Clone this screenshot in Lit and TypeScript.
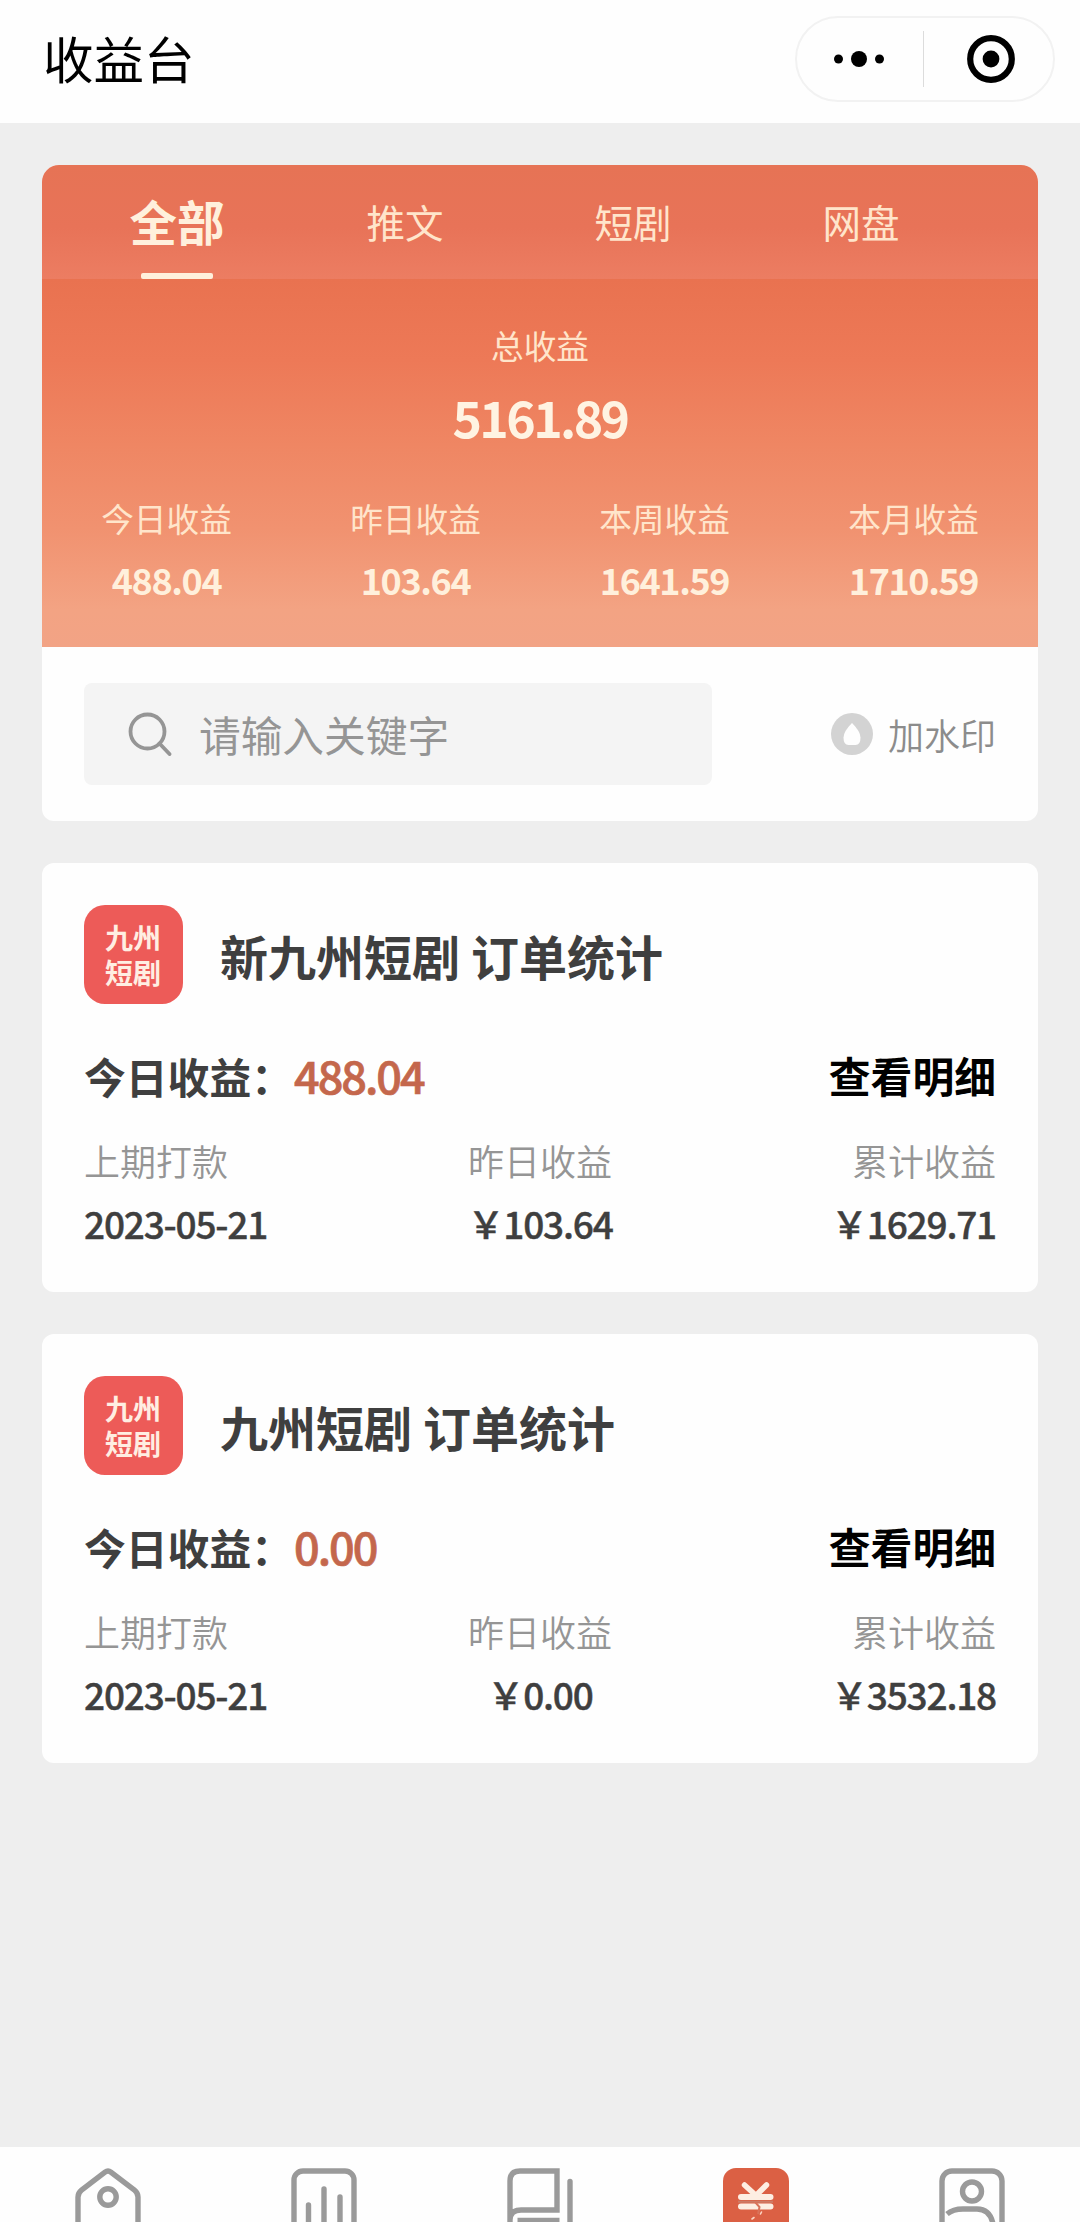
import { LitElement, html, css, svg } from "lit";
import { customElement, property } from "lit/decorators.js";

interface Stat {
  label: string;
  value: string;
}

interface Order {
  title: string;
  today: string;
  stats: Stat[];
}

const TABS = ["全部", "推文", "短剧", "网盘"];

const SUMMARY: Stat[] = [
  { label: "今日收益", value: "488.04" },
  { label: "昨日收益", value: "103.64" },
  { label: "本周收益", value: "1641.59" },
  { label: "本月收益", value: "1710.59" },
];

const ORDERS: Order[] = [
  {
    title: "新九州短剧 订单统计",
    today: "488.04",
    stats: [
      { label: "上期打款", value: "2023-05-21" },
      { label: "昨日收益", value: "￥103.64" },
      { label: "累计收益", value: "￥1629.71" },
    ],
  },
  {
    title: "九州短剧 订单统计",
    today: "0.00",
    stats: [
      { label: "上期打款", value: "2023-05-21" },
      { label: "昨日收益", value: "￥0.00" },
      { label: "累计收益", value: "￥3532.18" },
    ],
  },
];

/* Tab bar glyphs, each drawn on a 66-unit square. */
const NAV_ICONS = [
  svg`<path d="M3 70V29Q3 25 6.500 22.200L30 4.200Q33 2 36 4.200L59.500 22.200Q63 25 63 29V70"/>
      <circle cx="33" cy="29" r="8.200"/>`,
  svg`<rect x="3" y="3" width="60" height="70" rx="9"/>
      <path stroke-linecap="round" d="M17.500 37V70M33 21V70M49 29V70"/>`,
  svg`<path d="M3 70V13Q3 3 13 3H50V42H14Q3 42 3 52"/>
      <path d="M10.500 52.500H52.500"/>
      <path stroke-linecap="round" d="M63 13.500V70"/>`,
  svg`<rect x="0" y="0" width="66" height="70" rx="13" fill="#db6044" stroke="none"/>
      <g stroke="#fdeee2" stroke-width="6" stroke-linecap="round">
        <path stroke-width="5.500" d="M21.500 17L33 27.500L43.500 17"/>
        <path d="M18 29H47.500M18 38.500H47.500"/>
      </g>
      <path d="M15 33.800H50" stroke="#cc7b66" stroke-width="2"/>
      <path d="M32 34L36.500 39L35 46" stroke="#d8735a" stroke-width="2"/>
      <path d="M37.500 46L38.500 44M29 51L31 49.500" stroke="#fbd5c4" stroke-width="1.600" stroke-linecap="round"/>`,
  svg`<rect x="3" y="3" width="60" height="70" rx="10"/>
      <circle cx="33" cy="23.500" r="9.500"/>
      <path d="M8 46Q14 41 24 41H38Q51 41 54 56"/>`,
];

@customElement("order-card")
class OrderCard extends LitElement {
  @property({ attribute: false }) order!: Order;

  static styles = css`
    :host {
      display: flex;
      flex-direction: column;
      box-sizing: border-box;
      height: 429px;
      padding: 42px;
      border-radius: 12px;
      background: #fefefe;
      color: #3f3f3f;
    }
    .head {
      display: flex;
      align-items: center;
      gap: 37px;
      height: 99px;
    }
    .logo {
      display: flex;
      align-items: center;
      justify-content: center;
      width: 99px;
      height: 99px;
      border-radius: 21px;
      background: #ed5b58;
      color: #ffeee2;
      font-size: 28px;
      line-height: 35px;
      font-weight: 700;
    }
    .logo-text {
      width: 57px;
      word-break: break-all;
    }
    .title {
      font-size: 48px;
      line-height: 60px;
      font-weight: 700;
      white-space: pre;
    }
    .today {
      display: flex;
      justify-content: space-between;
      height: 60px;
      margin-top: 41px;
      font-size: 41.8px;
      line-height: 60px;
      font-weight: 700;
    }
    .amount {
      display: inline-block;
      margin-left: 1px;
      font-size: 45px;
      font-weight: 500;
      letter-spacing: -2px;
      color: #c4674c;
      -webkit-text-stroke: 0.7px #c4674c;
    }
    .link {
      color: #000;
    }
    .stats {
      display: grid;
      grid-template-columns: 1fr 1fr 1fr;
      margin-top: 30px;
    }
    .stat {
      text-align: center;
    }
    .stat:first-child {
      text-align: left;
    }
    .stat:last-child {
      text-align: right;
    }
    .label {
      font-size: 36px;
      line-height: 50px;
      font-weight: 350;
      color: #959595;
    }
    .value {
      margin-top: 13px;
      font-size: 37px;
      line-height: 50px;
      font-weight: 500;
      letter-spacing: -1.2px;
      -webkit-text-stroke: 0.4px #3f3f3f;
    }
  `;

  render() {
    const { title, today, stats } = this.order;
    return html`
      <div class="head">
        <div class="logo"><div class="logo-text">九州短剧</div></div>
        <div class="title">${title}</div>
      </div>
      <div class="today">
        <span>今日收益：<span class="amount">${today}</span></span>
        <span class="link">查看明细</span>
      </div>
      <div class="stats">
        ${stats.map(
          (s) => html`<div class="stat">
            <div class="label">${s.label}</div>
            <div class="value">${s.value}</div>
          </div>`
        )}
      </div>
    `;
  }
}

@customElement("app-root")
class AppRoot extends LitElement {
  static styles = css`
    :host {
      display: flex;
      flex-direction: column;
      height: 2222px;
      overflow: hidden;
      background: #eeeeee;
      font-family: "Noto Sans CJK SC", sans-serif;
    }
    .header {
      display: flex;
      align-items: center;
      justify-content: space-between;
      box-sizing: border-box;
      height: 123px;
      flex: none;
      padding: 0 25px 5px 43px;
      background: #fefefe;
    }
    .page-title {
      padding-bottom: 4px;
      font-size: 50.5px;
      line-height: 72px;
      color: #000;
    }
    .capsule {
      display: flex;
      align-items: center;
      box-sizing: border-box;
      width: 260px;
      height: 86px;
      border: 2px solid #f2f2f2;
      border-radius: 43px;
    }
    .capsule-half {
      display: flex;
      flex: 1;
      justify-content: center;
    }
    .capsule-half:first-child {
      padding-right: 2px;
    }
    .capsule-half:last-child {
      padding-left: 6px;
    }
    .divider {
      width: 1px;
      height: 56px;
      background: #dcdcdc;
    }
    .content {
      display: flex;
      flex-direction: column;
      gap: 42px;
      flex: 1;
      padding: 42px 42px 0;
    }
    .summary {
      border-radius: 17px 17px 12px 12px;
      overflow: hidden;
      background: #fefefe;
    }
    .tabs {
      display: grid;
      grid-template-columns: repeat(4, 228px);
      height: 114px;
      padding-left: 21px;
      background: linear-gradient(#e67355 0%, #e87358 55%, #ec7d62 100%);
    }
    .tab {
      display: flex;
      flex-direction: column;
      align-items: center;
      justify-content: space-between;
      font-size: 38.5px;
      line-height: 56px;
      padding-top: 28px;
      color: #ffe5cb;
    }
    .tab.active {
      font-size: 47.5px;
      font-weight: 700;
      color: #fff0dc;
    }
    .underline {
      width: 72px;
      height: 6px;
      border-radius: 2px;
      background: #fff0dc;
    }
    .totals {
      box-sizing: border-box;
      height: 368px;
      padding-top: 42px;
      text-align: center;
      color: #ffe5cb;
      background: linear-gradient(#e97250 0%, #ed7957 22%, #ef8663 45%, #f19270 68%, #f3a383 90%, #f2a385 100%);
    }
    .total-label,
    .cell-label {
      font-size: 32.7px;
      line-height: 48px;
    }
    .total {
      margin-top: 12px;
      font-size: 50px;
      line-height: 70px;
      font-weight: 700;
      letter-spacing: -2.6px;
      color: #fff3e2;
    }
    .cells {
      display: grid;
      grid-template-columns: repeat(4, 1fr);
      margin-top: 43px;
    }
    .cell-value {
      margin-top: 12px;
      font-size: 36px;
      line-height: 50px;
      font-weight: 700;
      letter-spacing: -1.4px;
      color: #fff0dc;
    }
    .tools {
      display: flex;
      align-items: center;
      justify-content: space-between;
      box-sizing: border-box;
      height: 174px;
      padding: 0 42px;
    }
    .search {
      display: flex;
      align-items: center;
      gap: 27px;
      box-sizing: border-box;
      width: 628px;
      height: 102px;
      padding-left: 44px;
      border-radius: 8px;
      background: #f4f4f4;
      color: #959595;
      font-size: 41.7px;
      line-height: 60px;
    }
    .watermark {
      display: flex;
      align-items: center;
      gap: 15px;
      font-size: 36px;
      line-height: 52px;
      font-weight: 350;
      color: #8c8c8c;
    }
    .icon {
      display: block;
      flex: none;
    }
    .nav {
      display: grid;
      grid-template-columns: repeat(5, 1fr);
      justify-items: center;
      flex: none;
      box-sizing: border-box;
      height: 75px;
      padding-top: 21px;
      overflow: hidden;
      background: #fefefe;
    }
  `;

  render() {
    return html`
      <div class="header">
        <div class="page-title">收益台</div>
        <div class="capsule">
          <div class="capsule-half">
            <svg class="icon" width="52" height="20" viewBox="0 0 52 20">
              <circle cx="5.500" cy="10" r="4.500" />
              <circle cx="26" cy="10" r="8" />
              <circle cx="46.500" cy="10" r="4.500" />
            </svg>
          </div>
          <div class="divider"></div>
          <div class="capsule-half">
            <svg class="icon" width="48" height="48" viewBox="0 0 48 48">
              <circle cx="24" cy="24" r="20.800" fill="none" stroke="#000" stroke-width="6.200" />
              <circle cx="24" cy="24" r="8.400" />
            </svg>
          </div>
        </div>
      </div>

      <div class="content">
        <div class="summary">
          <div class="tabs">
            ${TABS.map(
              (t, i) => html`<div class="tab ${i === 0 ? "active" : ""}">
                <span>${t}</span>
                ${i === 0 ? html`<div class="underline"></div>` : ""}
              </div>`
            )}
          </div>
          <div class="totals">
            <div class="total-label">总收益</div>
            <div class="total">5161.89</div>
            <div class="cells">
              ${SUMMARY.map(
                (s) => html`<div>
                  <div class="cell-label">${s.label}</div>
                  <div class="cell-value">${s.value}</div>
                </div>`
              )}
            </div>
          </div>
          <div class="tools">
            <div class="search">
              <svg class="icon" width="44" height="44" viewBox="0 0 44 44" fill="none" stroke="#959595" stroke-width="3.800">
                <circle cx="19.500" cy="19.500" r="17" />
                <path d="M31.500 31.500L41.500 42" stroke-linecap="round" />
              </svg>
              <span>请输入关键字</span>
            </div>
            <div class="watermark">
              <svg class="icon" width="42" height="42" viewBox="0 0 42 42">
                <circle cx="21" cy="21" r="21" fill="#d3d3d3" />
                <path d="M21 10Q29.500 18.500 29.500 24.500Q29.500 32 24.500 32H17.500Q12.500 32 12.500 24.500Q12.500 18.500 21 10Z" fill="#fefefe" />
              </svg>
              <span>加水印</span>
            </div>
          </div>
        </div>
        ${ORDERS.map((o) => html`<order-card .order=${o}></order-card>`)}
      </div>

      <div class="nav">
        ${NAV_ICONS.map(
          (icon) => html`<svg class="icon" width="66" height="66" viewBox="0 0 66 66" fill="none" stroke="#9a9a9a" stroke-width="5.400">
            ${icon}
          </svg>`
        )}
      </div>
    `;
  }
}
